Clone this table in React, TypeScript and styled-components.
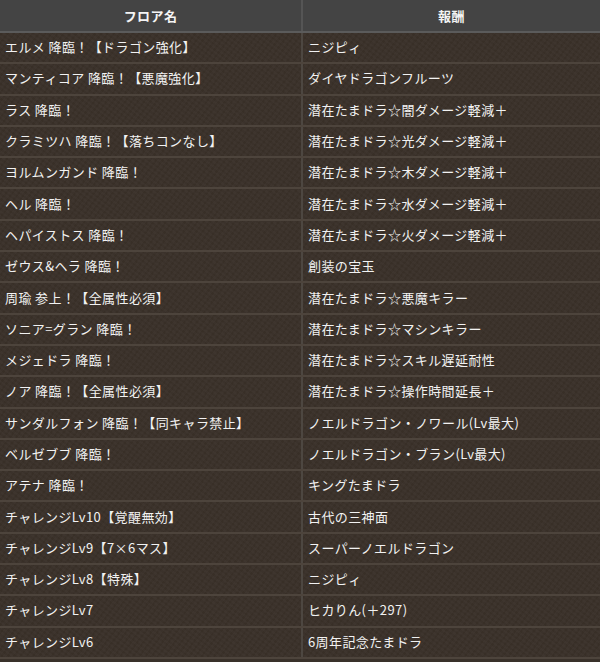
import React from "react";
import styled, { createGlobalStyle } from "styled-components";

const Global = createGlobalStyle`
  html, body { margin: 0; padding: 0; background: #39312a; }
  body { font-family: "Noto Sans CJK JP", "Noto Sans", sans-serif; }
`;

const Table = styled.table`
  width: 600px;
  border-collapse: collapse;
  table-layout: fixed;
  background-color: #3a3129;
  background-image:
    repeating-linear-gradient(37deg, rgba(255,255,255,0.012) 0 2px, rgba(0,0,0,0.018) 2px 4px),
    repeating-linear-gradient(-53deg, rgba(255,255,255,0.01) 0 3px, rgba(0,0,0,0.018) 3px 5px);
  color: #f2f2f2;
  font-size: 13px;
  letter-spacing: 0.4px;
`;

const Col = styled.col<{ $w: number }>`
  width: ${(p) => p.$w}px;
`;

const Th = styled.th`
  background: #444444;
  color: #f4f4f4;
  font-weight: bold;
  text-align: center;
  height: 31px;
  padding: 0;
  border-bottom: 2px solid #5b5b5b;
  border-right: 2px solid #555555;
  &:last-child { border-right: none; }
`;

const Row = styled.tr`
  height: 31.3px;
`;

const Td = styled.td`
  padding: 0 0 1px 5px;
  line-height: 18px;
  white-space: nowrap;
  border-bottom: 2px solid #4d443c;
  border-right: 2px solid #4d4741;
  &:last-child { border-right: none; padding-left: 5px; }
`;

const rows: [string, string][] = [
  ["エルメ 降臨！【ドラゴン強化】", "ニジピィ"],
  ["マンティコア 降臨！【悪魔強化】", "ダイヤドラゴンフルーツ"],
  ["ラス 降臨！", "潜在たまドラ☆闇ダメージ軽減＋"],
  ["クラミツハ 降臨！【落ちコンなし】", "潜在たまドラ☆光ダメージ軽減＋"],
  ["ヨルムンガンド 降臨！", "潜在たまドラ☆木ダメージ軽減＋"],
  ["ヘル 降臨！", "潜在たまドラ☆水ダメージ軽減＋"],
  ["ヘパイストス 降臨！", "潜在たまドラ☆火ダメージ軽減＋"],
  ["ゼウス&ヘラ 降臨！", "創装の宝玉"],
  ["周瑜 参上！【全属性必須】", "潜在たまドラ☆悪魔キラー"],
  ["ソニア=グラン 降臨！", "潜在たまドラ☆マシンキラー"],
  ["メジェドラ 降臨！", "潜在たまドラ☆スキル遅延耐性"],
  ["ノア 降臨！【全属性必須】", "潜在たまドラ☆操作時間延長＋"],
  ["サンダルフォン 降臨！【同キャラ禁止】", "ノエルドラゴン・ノワール(Lv最大)"],
  ["ベルゼブブ 降臨！", "ノエルドラゴン・ブラン(Lv最大)"],
  ["アテナ 降臨！", "キングたまドラ"],
  ["チャレンジLv10【覚醒無効】", "古代の三神面"],
  ["チャレンジLv9【7×6マス】", "スーパーノエルドラゴン"],
  ["チャレンジLv8【特殊】", "ニジピィ"],
  ["チャレンジLv7", "ヒカりん(＋297)"],
  ["チャレンジLv6", "6周年記念たまドラ"],
];

export default function App() {
  return (
    <>
      <Global />
      <Table>
        <colgroup>
          <Col $w={302} />
          <Col $w={298} />
        </colgroup>
        <thead>
          <tr>
            <Th>フロア名</Th>
            <Th>報酬</Th>
          </tr>
        </thead>
        <tbody>
          {rows.map(([a, b], i) => (
            <Row key={i}>
              <Td>{a}</Td>
              <Td>{b}</Td>
            </Row>
          ))}
        </tbody>
      </Table>
    </>
  );
}
